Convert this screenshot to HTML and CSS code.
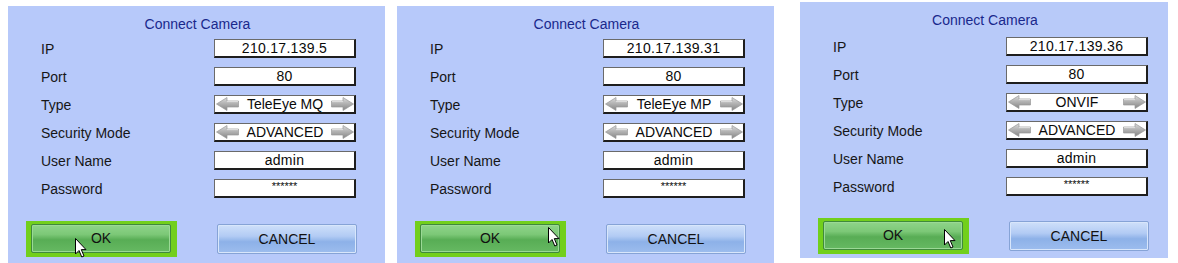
FILE: index.html
```html
<!DOCTYPE html>
<html>
<head>
<meta charset="utf-8">
<link rel="stylesheet" href="styles.css">
</head>
<body>
<svg class="defs" width="0" height="0" aria-hidden="true">
  <defs>
    <linearGradient id="ag" x1="0" y1="0" x2="0" y2="1">
      <stop offset="0" stop-color="#dcdcdc"/>
      <stop offset="0.45" stop-color="#b4b4b4"/>
      <stop offset="1" stop-color="#858585"/>
    </linearGradient>
    <symbol id="arrowL" viewBox="0 0 23 14">
      <path d="M0.5 7 L11 0.5 L11 4 L22.5 4 L22.5 10 L11 10 L11 13.5 Z" fill="url(#ag)" stroke="#9a9a9a" stroke-width="0.7" stroke-linejoin="round"/>
      <path d="M11 4.6 L22 4.6" stroke="#ececec" stroke-width="0.8"/>
    </symbol>
    <symbol id="arrowR" viewBox="0 0 23 14">
      <path d="M22.5 7 L12 0.5 L12 4 L0.5 4 L0.5 10 L12 10 L12 13.5 Z" fill="url(#ag)" stroke="#9a9a9a" stroke-width="0.7" stroke-linejoin="round"/>
      <path d="M1 4.6 L12 4.6" stroke="#ececec" stroke-width="0.8"/>
    </symbol>
    <symbol id="cursor" viewBox="0 0 12 20">
      <path d="M0.5 0.5 L0.5 16 L4 12.5 L6.8 19 L9 18 L6.3 11.6 L11 11.6 Z" fill="#fff" stroke="#000" stroke-width="1" stroke-linejoin="round"/>
    </symbol>
  </defs>
</svg>

<div class="panel panel-1">
  <div class="title">Connect Camera</div>
  <div class="form">
    <div class="label">IP</div><div class="field">210.17.139.5</div>
    <div class="label">Port</div><div class="field">80</div>
    <div class="label">Type</div>
    <div class="field select"><svg class="arrow"><use href="#arrowL"/></svg><span>TeleEye MQ</span><svg class="arrow"><use href="#arrowR"/></svg></div>
    <div class="label">Security Mode</div>
    <div class="field select"><svg class="arrow"><use href="#arrowL"/></svg><span>ADVANCED</span><svg class="arrow"><use href="#arrowR"/></svg></div>
    <div class="label">User Name</div><div class="field">admin</div>
    <div class="label">Password</div><div class="field pass">******</div>
  </div>
  <div class="buttons">
    <div class="focus"><div class="btn ok">OK</div></div>
    <div class="btn cancel">CANCEL</div>
  </div>
  <svg class="pointer pointer-1"><use href="#cursor"/></svg>
</div>

<div class="panel panel-2">
  <div class="title">Connect Camera</div>
  <div class="form">
    <div class="label">IP</div><div class="field">210.17.139.31</div>
    <div class="label">Port</div><div class="field">80</div>
    <div class="label">Type</div>
    <div class="field select"><svg class="arrow"><use href="#arrowL"/></svg><span>TeleEye MP</span><svg class="arrow"><use href="#arrowR"/></svg></div>
    <div class="label">Security Mode</div>
    <div class="field select"><svg class="arrow"><use href="#arrowL"/></svg><span>ADVANCED</span><svg class="arrow"><use href="#arrowR"/></svg></div>
    <div class="label">User Name</div><div class="field">admin</div>
    <div class="label">Password</div><div class="field pass">******</div>
  </div>
  <div class="buttons">
    <div class="focus"><div class="btn ok">OK</div></div>
    <div class="btn cancel">CANCEL</div>
  </div>
  <svg class="pointer pointer-2"><use href="#cursor"/></svg>
</div>

<div class="panel panel-3">
  <div class="title">Connect Camera</div>
  <div class="form">
    <div class="label">IP</div><div class="field">210.17.139.36</div>
    <div class="label">Port</div><div class="field">80</div>
    <div class="label">Type</div>
    <div class="field select"><svg class="arrow"><use href="#arrowL"/></svg><span>ONVIF</span><svg class="arrow"><use href="#arrowR"/></svg></div>
    <div class="label">Security Mode</div>
    <div class="field select"><svg class="arrow"><use href="#arrowL"/></svg><span>ADVANCED</span><svg class="arrow"><use href="#arrowR"/></svg></div>
    <div class="label">User Name</div><div class="field">admin</div>
    <div class="label">Password</div><div class="field pass">******</div>
  </div>
  <div class="buttons">
    <div class="focus"><div class="btn ok">OK</div></div>
    <div class="btn cancel">CANCEL</div>
  </div>
  <svg class="pointer pointer-3"><use href="#cursor"/></svg>
</div>
</body>
</html>
```

FILE: styles.css
```css
html, body {
  margin: 0;
  padding: 0;
  background: #ffffff;
}
body {
  width: 1178px;
  height: 263px;
  overflow: hidden;
  display: flex;
  align-items: flex-start;
  font-family: "Liberation Sans", Arial, sans-serif;
}
.defs {
  position: absolute;
  width: 0;
  height: 0;
}
.panel {
  position: relative;
  box-sizing: border-box;
  background: #b7c9fa;
  width: 377px;
  height: 257px;
  padding-top: 8px;
}
.panel-1 {
  margin-left: 8px;
  margin-top: 6px;
}
.panel-2 {
  margin-left: 12px;
  margin-top: 6px;
}
.panel-3 {
  margin-left: 26px;
  margin-top: 2px;
  width: 368px;
  height: 256px;
  background: #b8caf9;
}
.title {
  height: 20px;
  line-height: 20px;
  text-align: center;
  font-size: 14px;
  color: #19288c;
  padding-left: 2px;
}
.form {
  margin-top: 5px;
  padding-left: 33px;
  display: grid;
  grid-template-columns: 173px 142px;
  grid-auto-rows: 19px;
  row-gap: 9px;
}
.panel-3 .form {
  margin-top: 7px;
}
.label {
  font-size: 14px;
  line-height: 19px;
  padding-top: 1px;
  color: #161616;
}
.field {
  box-sizing: border-box;
  height: 19px;
  background: #ffffff;
  border: 1px solid #6a6a6a;
  border-right: 2px solid #1e1e1e;
  border-bottom: 2px solid #1e1e1e;
  font-size: 14px;
  line-height: 16px;
  letter-spacing: 0.3px;
  text-align: center;
  color: #0a0a0a;
}
.pass {
  font-size: 11px;
  line-height: 12px;
  letter-spacing: 0;
}
.select {
  display: flex;
  align-items: center;
  justify-content: space-between;
  padding: 0 0 0 1px;
  letter-spacing: 0;
}
.select span {
  flex: 1;
  text-align: center;
  white-space: nowrap;
}
.arrow {
  width: 23px;
  height: 14px;
  flex: none;
}
.buttons {
  margin-top: 23px;
  padding-left: 18px;
  display: flex;
  align-items: center;
  gap: 40px;
}
.panel-3 .buttons {
  margin-top: 22px;
}
.focus {
  background: #72cf1c;
  padding: 3px 6px 4px 5px;
}
.btn {
  box-sizing: border-box;
  width: 140px;
  font-size: 14px;
  text-align: center;
  color: #111;
  border-radius: 2px;
}
.ok {
  height: 29px;
  line-height: 27px;
  border: 1px solid #3f8a3c;
  background: linear-gradient(#8fd48a 0%, #7cc877 35%, #58ad55 55%, #66b962 100%);
  box-shadow: inset 0 0 0 1px #9bd996;
}
.cancel {
  height: 30px;
  line-height: 28px;
  border: 1px solid #86a3d6;
  background: linear-gradient(#cfe0fa 0%, #b2cbf4 40%, #8db1e8 60%, #9dbdee 100%);
  box-shadow: inset 0 0 0 1px #d8e6fb;
}
.pointer {
  position: absolute;
  width: 12px;
  height: 20px;
}
.pointer-1 {
  left: 67px;
  top: 232px;
}
.pointer-2 {
  left: 151px;
  top: 221px;
}
.pointer-3 {
  left: 144px;
  top: 227px;
}
```
